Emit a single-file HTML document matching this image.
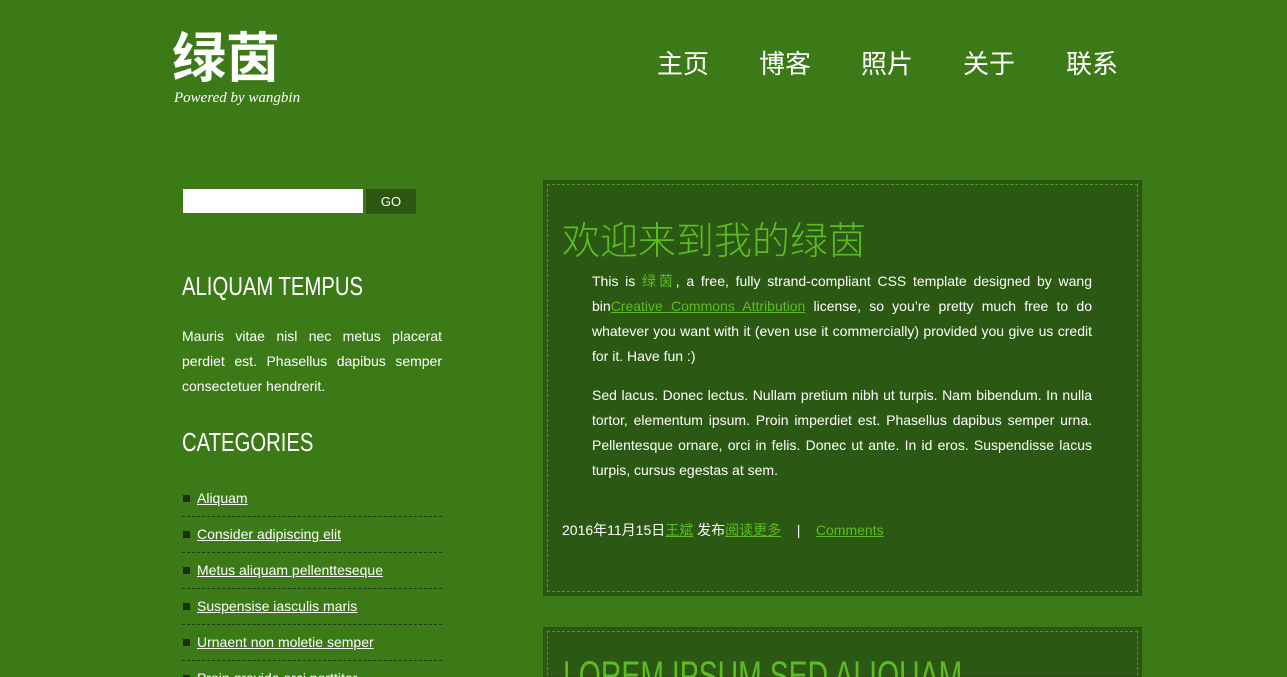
<!DOCTYPE html>
<html style="width:1287px;height:677px;overflow:hidden"><head><meta charset="utf-8"><style>
body{margin:0;width:1287px;height:677px;overflow:hidden;background:#3b7a17;font-family:"Liberation Sans","Noto Sans CJK SC",sans-serif;color:#fff;position:relative}
.a{position:absolute}
#logo{left:172px;top:24px;font-size:54px;font-weight:bold;line-height:60px;font-family:"Noto Sans CJK SC",sans-serif}
#pw{left:174px;top:90px;font:italic 15px "Liberation Serif",serif}
.nav{top:44px;font-size:26px;font-family:"Noto Sans CJK SC",sans-serif;line-height:38px}
#search{left:183px;top:189px;width:180px;height:24px;background:#fff}
#go{left:366px;top:189px;width:50px;height:25px;background:#2d5710;font-size:13px;line-height:26px;text-align:center}
h2{position:absolute;margin:0;font-weight:normal;font-size:26px;font-family:"Liberation Sans Narrow","Liberation Sans",sans-serif;transform:scaleX(.78);transform-origin:left;white-space:nowrap}
.side{left:182px;width:260px;font-size:14px;line-height:25px;text-align:justify}
ul{position:absolute;left:182px;top:481px;width:260px;margin:0;padding:0;list-style:none}
li{height:35px;border-bottom:1px dashed #1f3a0c;font-size:14px;line-height:34px;padding-left:15px;position:relative}
li:before{content:"";position:absolute;left:1px;top:14px;width:7px;height:7px;background:#1a2e0c}
li a{color:#fff;text-decoration:underline}
.post{left:543px;width:599px;background:#2b5812;box-sizing:border-box;border:1px solid #2a4f10;overflow:hidden}
.post .in{position:absolute;left:3px;top:3px;right:3px;bottom:3px;border:1px dashed #4e9a22}
.title{color:#5ebc22;font-size:38px;font-family:"Noto Sans CJK SC",sans-serif;font-weight:300;white-space:nowrap}
.txt{left:592px;width:500px;font-size:14px;line-height:25px;text-align:justify}
.g{color:#5ebc22}
p{margin:0 0 14px}
</style></head><body>
<div class="a" id="logo">绿茵</div>
<div class="a" id="pw">Powered by wangbin</div>
<div class="a nav" style="left:657px">主页</div>
<div class="a nav" style="left:759px">博客</div>
<div class="a nav" style="left:861px">照片</div>
<div class="a nav" style="left:963px">关于</div>
<div class="a nav" style="left:1066px">联系</div>
<div class="a" id="search"></div><div class="a" id="go">GO</div>
<h2 style="left:182px;top:271px">ALIQUAM TEMPUS</h2>
<div class="a side" style="top:324px">Mauris vitae nisl nec metus placerat perdiet est. Phasellus dapibus semper consectetuer hendrerit.</div>
<h2 style="left:182px;top:427px">CATEGORIES</h2>
<ul><li><a>Aliquam</a></li><li><a>Consider adipiscing elit</a></li><li><a>Metus aliquam pellentteseque</a></li><li><a>Suspensise iasculis maris</a></li><li><a>Urnaent non moletie semper</a></li><li><a>Proin gravida orci porttitor</a></li></ul>
<div class="a post" style="top:180px;height:416px"><div class="in"></div></div>
<div class="a title" style="left:562px;top:210px">欢迎来到我的绿茵</div>
<div class="a txt" style="top:269px"><p>This is <span class="g">绿茵</span>, a free, fully strand-compliant CSS template designed by wang bin<u class="g">Creative Commons Attribution</u> license, so you’re pretty much free to do whatever you want with it (even use it commercially) provided you give us credit for it. Have fun :)</p><p>Sed lacus. Donec lectus. Nullam pretium nibh ut turpis. Nam bibendum. In nulla tortor, elementum ipsum. Proin imperdiet est. Phasellus dapibus semper urna. Pellentesque ornare, orci in felis. Donec ut ante. In id eros. Suspendisse lacus turpis, cursus egestas at sem.</p></div>
<div class="a" style="left:562px;top:520px;font-size:14px;line-height:20px;white-space:pre">2016年11月15日<u class="g">王斌</u> 发布<u class="g">阅读更多</u>    |    <u class="g">Comments</u></div>
<div class="a post" style="top:627px;height:50px"><div class="in" style="bottom:-20px"></div></div>
<div class="a title" style="left:563px;top:654px;font-size:40px;font-family:'Liberation Sans Narrow','Liberation Sans',sans-serif;transform:scaleX(.71);transform-origin:left">LOREM IPSUM SED ALIQUAM</div>
</body></html>
